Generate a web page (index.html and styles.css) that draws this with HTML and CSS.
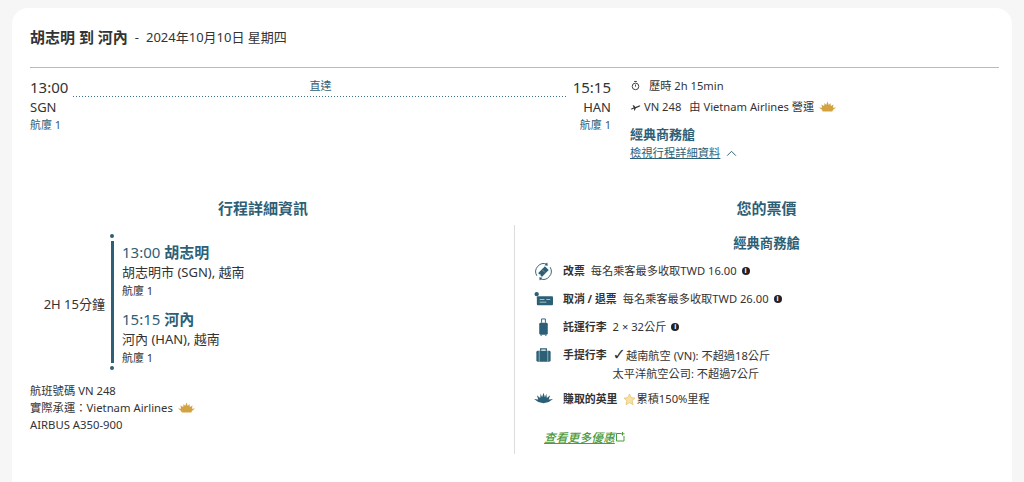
FILE: index.html
```html
<!DOCTYPE html>
<html lang="zh-Hant">
<head>
<meta charset="utf-8">
<title>行程</title>
<link rel="stylesheet" href="styles.css">
</head>
<body>
<main class="card">
  <header class="head"><strong class="route">胡志明 到 河內</strong><span class="sep">-</span><span class="date">2024年10月10日 星期四</span></header>
  <section class="summary">
    <div class="point">
      <div class="time">13:00</div>
      <div class="code">SGN</div>
      <div class="term">航廈 1</div>
    </div>
    <div class="line"><span class="direct">直達</span></div>
    <div class="point end">
      <div class="time">15:15</div>
      <div class="code">HAN</div>
      <div class="term">航廈 1</div>
    </div>
    <div class="info">
      <div class="info-row duration">
        <svg class="ico-s" viewBox="0 0 12 12"><circle cx="6" cy="7" r="3.6" fill="none" stroke="#333" stroke-width="1"/><path d="M4.500 1.600h3M6 5v2.200" stroke="#333" stroke-width="1" fill="none"/></svg>
        <span>歷時 2h 15min</span>
      </div>
      <div class="info-row flight">
        <svg class="ico-s" viewBox="0 0 12 12"><path d="M0.500 8.600 4 7.200 2.800 4.600 4 4.600 6 6.600 10 5c1.200-.4 1.500.5.700 1L6.300 8 5.300 10.400 4.400 10.400 4.500 8.300 2 9.300Z" fill="#333"/></svg>
        <span>VN 248</span><span class="by">由 Vietnam Airlines 營運</span>
        <svg class="lotus" viewBox="0 0 18 11"><path d="M0 6.500 3.300 6.800 2.600 3.500 5.400 5 6 1.800 7.600 3.800 9 0.300 10.400 3.800 12 1.800 12.600 5 15.400 3.500 14.700 6.800 18 6.500 15 9 14 10.800H4L3 9Z" fill="#d3a342"/></svg>
      </div>
      <div class="cabin">經典商務艙</div>
      <a class="toggle"><span class="toggle-text">檢視行程詳細資料</span>
        <svg class="chev" viewBox="0 0 12 8"><path d="M1 6.500 6 1.500 11 6.500" fill="none" stroke="#2d6076" stroke-width="1.100"/></svg>
      </a>
    </div>
  </section>
  <section class="details">
    <div class="left">
      <h2 class="col-title">行程詳細資訊</h2>
      <div class="timeline">
        <div class="dur">2H 15分鐘</div>
        <div class="bar"><i class="dot"></i><i class="rail"></i><i class="dot"></i></div>
        <div class="stops">
          <div class="stop">
            <div class="stop-head">13:00 <b>胡志明</b></div>
            <div class="stop-city">胡志明市 (SGN), 越南</div>
            <div class="stop-term">航廈 1</div>
          </div>
          <div class="stop">
            <div class="stop-head">15:15 <b>河內</b></div>
            <div class="stop-city">河內 (HAN), 越南</div>
            <div class="stop-term">航廈 1</div>
          </div>
        </div>
      </div>
      <div class="meta">
        <div>航班號碼 VN 248</div>
        <div class="meta-op">實際承運：Vietnam Airlines<svg class="lotus" viewBox="0 0 18 11"><path d="M0 6.500 3.300 6.800 2.600 3.500 5.400 5 6 1.800 7.600 3.800 9 0.300 10.400 3.800 12 1.800 12.600 5 15.400 3.500 14.700 6.800 18 6.500 15 9 14 10.800H4L3 9Z" fill="#d3a342"/></svg></div>
        <div>AIRBUS A350-900</div>
      </div>
    </div>
    <div class="right">
      <h2 class="col-title fare-title">您的票價</h2>
      <h3 class="fare-cabin">經典商務艙</h3>
      <ul class="fare-list">
        <li class="fare">
          <svg class="ico" viewBox="0 0 20 20"><path d="M3 14.500A8.500 8.500 0 0 1 13.500 2.300M17 5.500A8.500 8.500 0 0 1 6.500 17.700" fill="none" stroke="#2d6076" stroke-width="1"/><path d="M14 0.500 14.500 4 11 3.400ZM6 19.500 5.500 16 9 16.600Z" fill="#2d6076"/><path d="M4.500 11.500 11.500 4.500 15.500 8.500 8.500 15.500 7 14.800 7 13.200 5.300 13Z" fill="#2d6076"/><path d="M9 8.500 12 11.500" stroke="#fff" stroke-width=".6" stroke-dasharray="1 1"/></svg>
          <div class="fare-body"><b>改票</b><span>每名乘客最多收取TWD 16.00</span><i class="i">i</i></div>
        </li>
        <li class="fare">
          <svg class="ico" viewBox="0 0 20 20"><circle cx="2.800" cy="4.300" r="2.300" fill="#2d6076"/><rect x="3" y="6.500" width="17" height="9.500" rx="1" fill="#2d6076"/><path d="M6 10h5M6 12.800h7M13 10h4" stroke="#cfe0e6" stroke-width=".8"/></svg>
          <div class="fare-body"><b>取消 / 退票</b><span>每名乘客最多收取TWD 26.00</span><i class="i">i</i></div>
        </li>
        <li class="fare">
          <svg class="ico" viewBox="0 0 20 20"><path d="M8 5V1h4v4" fill="none" stroke="#2d6076" stroke-width="1"/><rect x="5.500" y="5" width="9" height="12.500" rx="1.500" fill="#2d6076"/><path d="M7.500 17.500v1.500M12.500 17.500v1.500" stroke="#2d6076" stroke-width="1"/></svg>
          <div class="fare-body"><b>託運行李</b><span>2 × 32公斤</span><i class="i">i</i></div>
        </li>
        <li class="fare carry-row">
          <svg class="ico" viewBox="0 0 20 20"><path d="M7 5V3h6v2" fill="none" stroke="#2d6076" stroke-width="1.400"/><rect x="2.500" y="5" width="15" height="11.500" rx="1.500" fill="#2d6076"/><path d="M5.500 5v11.500M14.500 5v11.500" stroke="#fff" stroke-width=".5"/></svg>
          <div class="fare-body carry"><b>手提行李</b><div class="carry-lines"><div><span class="tick">✓</span>越南航空 (VN): 不超過18公斤</div><div>太平洋航空公司: 不超過7公斤</div></div></div>
        </li>
        <li class="fare">
          <svg class="ico" viewBox="0 0 20 20"><path d="M0 9.500 4.500 10 3 5.500 6.500 8.500 7 4 8.500 7.500 10 3 11.500 7.500 13 4 13.500 8.500 17 5.500 15.500 10 20 9.500 15.500 12.500 10 14 4.500 12.500Z" fill="#2d6076"/></svg>
          <div class="fare-body"><b>賺取的英里</b>
            <svg class="star" viewBox="0 0 14 14"><path d="M7 1 8.800 5 13 5.500 9.900 8.300 10.800 12.600 7 10.400 3.200 12.600 4.100 8.300 1 5.500 5.200 5Z" fill="#f6e2a6" stroke="#e3c272" stroke-width=".8"/></svg>
            <span>累積150%里程</span></div>
        </li>
      </ul>
      <a class="more">查看更多優惠<svg class="ext" viewBox="0 0 10 10"><path d="M6 1.500H1.500V9H9V4" fill="none" stroke="#4f9a3e" stroke-width="1"/><path d="M7.500 0V3.500M6 1.800H9.500" stroke="#4f9a3e" stroke-width="1"/></svg></a>
    </div>
  </section>
</main>
</body>
</html>
```

FILE: styles.css
```css
* { box-sizing: border-box; }
html, body { height: 100%; }
body {
  margin: 0;
  height: 482px;
  overflow: hidden;
  background: #f6f6f6;
  padding: 8px 12px 0;
  color: #333;
  font-family: "Noto Sans", "Noto Sans CJK TC", sans-serif;
  font-size: 12px;
}
.card {
  background: #fff;
  border-radius: 16px 16px 0 0;
  height: 474px;
  padding: 19px 13px 0 18px;
}
.head {
  display: flex;
  align-items: center;
  height: 19px;
  gap: 7px;
  color: #333;
}
.route { font-size: 15px; font-weight: 700; }
.date { font-size: 13px; }
.sep { font-size: 13px; }
.summary {
  margin-top: 21px;
  border-top: 1px solid #9fc3d2;
  display: flex;
  align-items: flex-start;
  padding-top: 9px;
}
.point { width: 43px; flex: none; }
.point.end { text-align: right; width: 43px; }
.time { font-size: 15px; line-height: 20px; }
.code { font-size: 13px; line-height: 20px; }
.term { font-size: 11px; line-height: 14px; margin-top: 1px; color: #2d6076; }
.line {
  width: 495px;
  flex: none;
  height: 20px;
  text-align: center;
  font-size: 11px;
  line-height: 18px;
  color: #2d6076;
  background: linear-gradient(to right, #3b7289 50%, transparent 50%) left bottom / 3px 1px repeat-x;
}
.info { margin: 0 0 0 19px; flex: 1; }
.info-row { display: flex; align-items: center; font-size: 11.200px; line-height: 17px; }
.ico-s { width: 11px; height: 11px; margin-right: 7px; flex: none; }
.duration .ico-s { margin-right: 8px; }
.flight { margin-top: 4px; }
.flight .ico-s { margin-right: 3px; }
.by { margin-left: 8px; }
.lotus { width: 17px; height: 11px; margin-left: 5px; vertical-align: -1px; }
.cabin { margin-top: 10px; font-size: 13px; font-weight: 700; line-height: 18px; color: #2d6076; }
.toggle { display: flex; align-items: center; margin-top: 1px; color: #2d6076; font-size: 11.300px; line-height: 18px; }
.toggle-text { text-decoration: underline; }
.chev { width: 11px; height: 7px; margin-left: 6px; }
.details {
  margin-top: 36px;
  display: grid;
  grid-template-columns: 484px 1fr;
}
.col-title {
  margin: 0;
  padding-right: 18px;
  text-align: center;
  font-size: 15px;
  font-weight: 700;
  line-height: 20px;
  color: #2d6076;
}
.timeline {
  display: flex;
  margin-top: 16px;
  height: 136px;
}
.dur { width: 75px; flex: none; align-self: center; margin-top: 4px; text-align: right; font-size: 13px; line-height: 18px; }
.bar { width: 4px; margin-left: 5px; flex: none; display: flex; flex-direction: column; align-items: center; gap: 3px; }
.dot { width: 4px; height: 4px; border-radius: 50%; background: #2d6076; flex: none; }
.rail { flex: 1; width: 3px; background: #2d6076; }
.stops { margin-left: 8px; padding-top: 8px; }
.stop + .stop { margin-top: 11px; }
.stop-head { font-size: 15px; line-height: 20px; color: #2d6076; }
.stop-head b { font-weight: 700; }
.stop-city { font-size: 13px; line-height: 18px; margin-top: 1px; }
.stop-term { font-size: 11px; line-height: 15px; margin-top: 2px; }
.meta { margin-top: 12px; font-size: 11.300px; line-height: 17px; }
.right {
  position: relative;
  display: flex;
  flex-direction: column;
}
.col-title.fare-title { padding: 0 0 0 20px; }
.right::before {
  content: "";
  position: absolute;
  left: 0;
  top: 27px;
  height: 229px;
  width: 1px;
  background: #ddd;
}
.fare-cabin {
  margin: 16px 0 0;
  font-size: 13.300px;
  font-weight: 700;
  line-height: 18px;
  color: #2d6076;
  text-align: center;
  padding-left: 20px;
}
.fare-list { list-style: none; margin: 10px 0 0; padding: 0 0 0 20px; }
.fare { display: flex; align-items: flex-start; margin-bottom: 9px; }
.fare.carry-row { margin-bottom: 7px; }
.ico { width: 19px; height: 19px; flex: none; margin-right: 10px; }
.fare-body { display: flex; align-items: center; font-size: 11.200px; line-height: 18px; }
.fare-body b { font-size: 10.900px; font-weight: 700; margin-right: 6px; color: #333; }
.i {
  width: 8px;
  height: 8px;
  border-radius: 50%;
  background: #222;
  color: #fff;
  font-size: 7px;
  font-style: normal;
  font-weight: 700;
  line-height: 8px;
  text-align: center;
  margin-left: 5px;
}
.carry { align-items: flex-start; }
.tick { font-family: "DejaVu Sans", sans-serif; font-size: 16px; line-height: 18px; }
.star { width: 13px; height: 13px; flex: none; }
.more {
  margin: 11px 0 0 30px;
  color: #4f9a3e;
  font-size: 11.800px;
  font-style: italic;
  font-weight: 500;
  text-decoration: underline;
  line-height: 16px;
  display: inline-flex;
  align-self: flex-start;
  align-items: center;
}
.ext { width: 10px; height: 10px; }
```
